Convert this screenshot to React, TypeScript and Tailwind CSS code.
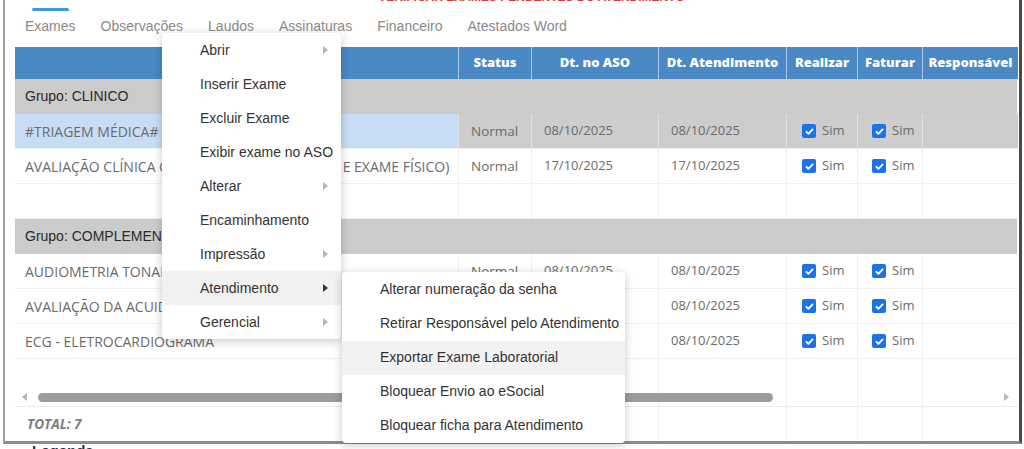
import React from "react";

const cols = "grid grid-cols-[443px_73px_127px_128px_71px_65px_1fr]";

type Row =
  | { kind: "group"; label: string }
  | { kind: "empty" }
  | { kind: "exam"; name: string; status: string; aso: string; atend: string; selected?: boolean };

const rows: Row[] = [
  { kind: "group", label: "Grupo: CLINICO" },
  { kind: "exam", name: "#TRIAGEM MÉDICA#", status: "Normal", aso: "08/10/2025", atend: "08/10/2025", selected: true },
  { kind: "exam", name: "AVALIAÇÃO CLÍNICA OCUPACIONAL (ANAMNESE E EXAME FÍSICO)", status: "Normal", aso: "17/10/2025", atend: "17/10/2025" },
  { kind: "empty" },
  { kind: "group", label: "Grupo: COMPLEMENTARES" },
  { kind: "exam", name: "AUDIOMETRIA TONAL", status: "Normal", aso: "08/10/2025", atend: "08/10/2025" },
  { kind: "exam", name: "AVALIAÇÃO DA ACUIDADE VISUAL", status: "Normal", aso: "08/10/2025", atend: "08/10/2025" },
  { kind: "exam", name: "ECG - ELETROCARDIOGRAMA", status: "Normal", aso: "08/10/2025", atend: "08/10/2025" },
];

const tabs = ["Exames", "Observações", "Laudos", "Assinaturas", "Financeiro", "Atestados Word"];

const menuItems = [
  { label: "Abrir", sub: true },
  { label: "Inserir Exame" },
  { label: "Excluir Exame" },
  { label: "Exibir exame no ASO" },
  { label: "Alterar", sub: true },
  { label: "Encaminhamento" },
  { label: "Impressão", sub: true },
  { label: "Atendimento", sub: true, active: true },
  { label: "Gerencial", sub: true },
];

const subItems = [
  { label: "Alterar numeração da senha" },
  { label: "Retirar Responsável pelo Atendimento" },
  { label: "Exportar Exame Laboratorial", active: true },
  { label: "Bloquear Envio ao eSocial" },
  { label: "Bloquear ficha para Atendimento" },
];

function Check() {
  return (
    <span className="flex h-[14px] w-[14px] items-center justify-center rounded-[2px] bg-[#1a73e8]">
      <svg viewBox="0 0 12 12" className="h-[11px] w-[11px]">
        <path d="M2.6 6.3l2.2 2.2 4.6-4.8" fill="none" stroke="white" strokeWidth="2" strokeLinecap="round" strokeLinejoin="round" />
      </svg>
    </span>
  );
}

function Arrow({ dark, left }: { dark?: boolean; left?: boolean }) {
  return (
    <svg viewBox="0 0 5 8" className="h-[8px] w-[5px]">
      <path d={left ? "M5 0L0 4l5 4z" : "M0 0l5 4-5 4z"} fill={dark ? "#333" : "#b5b5b5"} />
    </svg>
  );
}

function ExamRow({ r }: { r: Extract<Row, { kind: "exam" }> }) {
  const cell = r.selected ? "bg-[#cdcdcd] border-l border-[#e2e2e2]" : "border-l border-[#efefef]";
  return (
    <div className={`${cols} h-[35px] border-b border-[#efefef] text-[13px] text-[#6b6b6b]`}>
      <div className={`flex items-center overflow-hidden whitespace-nowrap pl-[10px] text-[14px] ${r.selected ? "bg-[#c7ddf6]" : ""}`}>{r.name}</div>
      <div className={`flex items-center pl-[12px] text-[13.5px] ${cell}`}>{r.status}</div>
      <div className={`flex items-center pl-[12px] ${cell}`}>{r.aso}</div>
      <div className={`flex items-center pl-[12px] ${cell}`}>{r.atend}</div>
      <div className={`flex items-center gap-[6px] pl-[15px] ${cell}`}>
        <Check />
        <span>Sim</span>
      </div>
      <div className={`flex items-center gap-[6px] pl-[14px] ${cell}`}>
        <Check />
        <span>Sim</span>
      </div>
      <div className={cell} />
    </div>
  );
}

function BlankCells({ h }: { h: string }) {
  return (
    <div className={`${cols} ${h}`}>
      <div />
      {[0, 1, 2, 3, 4, 5].map((i) => (
        <div key={i} className="border-l border-[#efefef]" />
      ))}
    </div>
  );
}

export default function App() {
  return (
    <div className="relative h-[449px] w-[1024px] overflow-hidden bg-white font-['Liberation_Sans',Arial,sans-serif]">
      <div className="ml-[3px] h-[444px] w-[1019px] border-b-[3px] border-l-2 border-r-[3px] border-b-[#8c8c8c] border-l-[#a0a0a0] border-r-[#4a4a4a] bg-white pl-[10px] pr-[1px]">
        {/* page title, mostly cut off */}
        <div className="flex h-[4px] justify-center overflow-hidden pl-[30px]">
          <span className="-mt-[12px] text-[12px] font-bold text-[#d9383a]">VERIFICAR EXAMES PENDENTES DO ATENDIMENTO</span>
        </div>

        {/* tabs */}
        <div className="mt-[4px] flex gap-[25px] pl-[10px] text-[14px] text-[#8a8a8a]">
          {tabs.map((t, i) => (
            <div key={t} className="flex flex-col items-center">
              <div className={`h-[3px] w-[37px] rounded-full ${i === 0 ? "bg-[#3b9be0]" : "bg-transparent"}`} />
              <div className="mt-[7px] leading-[16px]">{t}</div>
            </div>
          ))}
        </div>

        {/* table */}
        <div className="relative mt-[13px] font-['Open_Sans',sans-serif]">
          <div className={`${cols} h-[32px] bg-[#4a89c5] text-[13px] font-extrabold text-white`}>
            {["Exame", "Status", "Dt. no ASO", "Dt. Atendimento", "Realizar", "Faturar", "Responsável"].map((h, i) => (
              <div key={h} className={`flex items-center justify-center whitespace-nowrap ${i > 0 ? "border-l border-[#a9c8e6]" : ""}`}>
                {h}
              </div>
            ))}
          </div>

          {rows.map((r, i) =>
            r.kind === "group" ? (
              <div key={i} className="mr-[1px] flex h-[35px] items-center bg-[#cbcbcb] pl-[10px] font-['Liberation_Sans',Arial,sans-serif] text-[14px] text-[#2a2a2a]">
                {r.label}
              </div>
            ) : r.kind === "empty" ? (
              <BlankCells key={i} h="h-[35px] border-b border-[#efefef]" />
            ) : (
              <ExamRow key={i} r={r} />
            )
          )}

          <div className="relative">
            <BlankCells h="h-[48px] border-b border-[#ececec]" />
            {/* horizontal scrollbar overlay */}
            <div className="absolute bottom-[5px] left-0 right-0 flex h-[10px] items-center">
              <div className="pl-[7px]">
                <Arrow left />
              </div>
              <div className="ml-[11px] h-[9px] w-[735px] rounded-full bg-[#9c9c9c]" />
              <div className="ml-auto pr-[9px]">
                <Arrow />
              </div>
            </div>
          </div>

          <div className={`${cols} h-[34px]`}>
            <div className="flex items-center pl-[12px] text-[13.5px] font-bold italic text-[#7d7d7d]">TOTAL: 7</div>
            {[0, 1, 2, 3, 4, 5].map((i) => (
              <div key={i} className="border-l border-[#f2f2f2]" />
            ))}
          </div>
        </div>
      </div>

      <div className="-mt-[1px] pl-[32px] text-[15px] font-bold leading-none text-[#1f2b5e]">Legenda</div>

      {/* context menu */}
      <div className="absolute left-[162px] top-[33px] w-[179px] rounded-[4px] bg-white text-[14px] text-[#333] shadow-[0_2px_10px_rgba(0,0,0,0.22)]">
        {menuItems.map((m) => (
          <div key={m.label} className={`flex h-[34px] items-center whitespace-nowrap pl-[38px] pr-[13px] ${m.active ? "bg-[#f1f1f1]" : ""}`}>
            <span className="flex-1">{m.label}</span>
            {m.sub && <Arrow dark={m.active} />}
          </div>
        ))}
      </div>

      {/* submenu */}
      <div className="absolute left-[342px] top-[272px] w-[283px] rounded-[4px] bg-white py-[0.5px] text-[14px] text-[#333] shadow-[0_2px_10px_rgba(0,0,0,0.22)]">
        {subItems.map((m) => (
          <div key={m.label} className={`flex h-[34px] items-center whitespace-nowrap pl-[38px] ${m.active ? "bg-[#f2f2f2]" : ""}`}>
            {m.label}
          </div>
        ))}
      </div>
    </div>
  );
}
